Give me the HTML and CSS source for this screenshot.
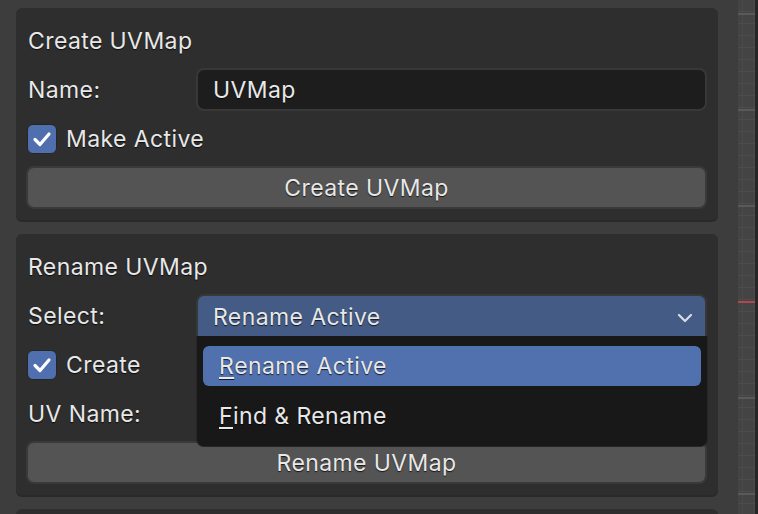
FILE: index.html
```html
<!DOCTYPE html>
<html>
<head>
<meta charset="utf-8">
<link rel="stylesheet" href="styles.css">
</head>
<body>
<div class="app">
  <div class="column">
    <section class="panel">
      <div class="row header">Create UVMap</div>
      <div class="row">
        <div class="label">Name:</div>
        <div class="field">UVMap</div>
      </div>
      <div class="row">
        <div class="check"><svg viewBox="0 0 28 28" width="28" height="28"><path d="M7 14.5 L12 19.5 L21 9" fill="none" stroke="#fff" stroke-width="3.2" stroke-linecap="round" stroke-linejoin="round"/></svg></div>
        <div class="check-label">Make Active</div>
      </div>
      <div class="row">
        <div class="button">Create UVMap</div>
      </div>
    </section>

    <section class="panel">
      <div class="row header">Rename UVMap</div>
      <div class="row">
        <div class="label">Select:</div>
        <div class="select-wrap">
          <div class="select">
            <span>Rename Active</span>
            <svg class="chev" viewBox="0 0 16 10" width="16" height="10"><path d="M2 2 L8 8 L14 2" fill="none" stroke="#d8dce6" stroke-width="2.2" stroke-linecap="round" stroke-linejoin="round"/></svg>
          </div>
          <div class="menu">
            <div class="item active"><u>R</u>ename Active</div>
            <div class="item"><u>F</u>ind &amp; Rename</div>
          </div>
        </div>
      </div>
      <div class="row">
        <div class="check"><svg viewBox="0 0 28 28" width="28" height="28"><path d="M7 14.5 L12 19.5 L21 9" fill="none" stroke="#fff" stroke-width="3.2" stroke-linecap="round" stroke-linejoin="round"/></svg></div>
        <div class="check-label">Create</div>
      </div>
      <div class="row">
        <div class="label">UV Name:</div>
        <div class="field"></div>
      </div>
      <div class="row">
        <div class="button">Rename UVMap</div>
      </div>
    </section>

    <section class="panel stub"></section>
  </div>
  <div class="ruler"></div>
  <div class="edge"></div>
</div>
</body>
</html>
```

FILE: styles.css
```css
* { box-sizing: border-box; }
html, body {
  margin: 0;
  height: 100%;
  overflow: hidden;
}
body {
  background: #3d3d3d;
  font-family: "Inter", "Noto Sans", sans-serif;
  font-size: 23px;
  letter-spacing: 0.4px;
  color: #e8e8e8;
}
.app {
  display: flex;
  height: 514px;
}
.column {
  width: 718px;
  padding: 8px 0 0 16px;
  display: flex;
  flex-direction: column;
  gap: 14px;
}
.panel {
  background: #2e2e2e;
  border-radius: 6px;
  padding: 11px 11px 11px 10px;
  display: flex;
  flex-direction: column;
  gap: 6px;
  box-shadow: 0 2px 0 #292929;
}
.panel.stub {
  flex: 1;
  border-radius: 6px 6px 0 0;
}
.row {
  height: 43px;
  display: flex;
  align-items: center;
  position: relative;
}
.header, .label, .check-label, .field, .button, .select, .item {
  text-shadow: 0 1px 1px rgba(0,0,0,0.75);
}
.header { padding-left: 2px; }
.label {
  width: 170px;
  padding-left: 2px;
  flex: none;
}
.field {
  flex: 1;
  height: 43px;
  background: #1d1d1d;
  border: 2px solid #383838;
  border-radius: 8px;
  padding-left: 15px;
  display: flex;
  align-items: center;
}
.check {
  width: 30px;
  height: 30px;
  margin-left: 1px;
  border-radius: 6px;
  background: #4f6fae;
  border: 1px solid #262626;
  display: flex;
  align-items: center;
  justify-content: center;
}
.check svg { display: block; }
.check-label { margin-left: 9px; }
.button {
  flex: 1;
  height: 43px;
  background: #545454;
  border: 2px solid #3a3a3a;
  border-radius: 8px;
  display: flex;
  align-items: center;
  justify-content: center;
}
.select-wrap {
  flex: 1;
  height: 43px;
  position: relative;
}
.select {
  height: 43px;
  background: #445b86;
  border: 2px solid #383838;
  border-bottom: none;
  border-radius: 8px 8px 0 0;
  padding-left: 15px;
  padding-right: 12px;
  display: flex;
  align-items: center;
  justify-content: space-between;
}
.chev { display: block; margin-top: 2px; }
.menu {
  position: absolute;
  top: 42px;
  left: 0;
  right: -1px;
  background: #181818;
  border: 1px solid #262626;
  border-top: none;
  border-radius: 0 0 8px 8px;
  padding: 10px 6px 10px 6px;
  display: flex;
  flex-direction: column;
  gap: 10px;
  z-index: 5;
}
.item {
  height: 40px;
  border-radius: 6px;
  padding-left: 16px;
  display: flex;
  align-items: center;
}
.item.active { background: #5070ae; }
.item u {
  text-decoration-thickness: 2px;
  text-underline-offset: 3px;
}
.ruler {
  margin-left: 20px;
  width: 17px;
  height: 514px;
  background-color: #444444;
  background-image:
    linear-gradient(to bottom, transparent 301px, #b2464e 301px, #b2464e 303px, transparent 303px),
    repeating-linear-gradient(to bottom, transparent 0, transparent 13px, #5a5a5a 13px, #5a5a5a 15px, transparent 15px, transparent 96px),
    repeating-linear-gradient(to bottom, transparent 0, transparent 11px, #4c4c4c 11px, #4c4c4c 12px),
    repeating-linear-gradient(to right, transparent 0, transparent 4px, #4a4a4a 4px, #4a4a4a 5px, transparent 5px, transparent 12px);
}
.edge {
  width: 3px;
  height: 514px;
  background: #262626;
}
```
